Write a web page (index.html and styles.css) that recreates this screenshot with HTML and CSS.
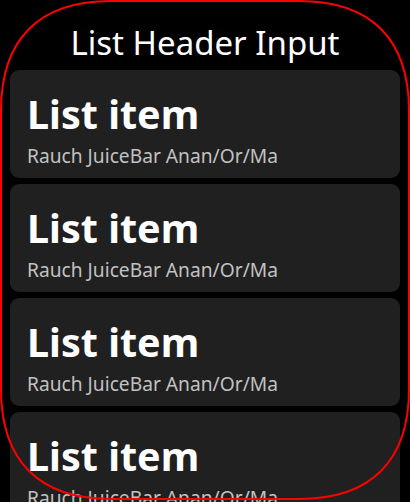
FILE: index.html
```html
<!DOCTYPE html>
<html>
<head>
<meta charset="utf-8">
<link rel="stylesheet" href="styles.css">
</head>
<body>
<div class="screen">
  <div class="header">List Header Input</div>
  <div class="list">
    <div class="item"><div class="title">List item</div><div class="sub">Rauch JuiceBar Anan/Or/Ma</div></div>
    <div class="item"><div class="title">List item</div><div class="sub">Rauch JuiceBar Anan/Or/Ma</div></div>
    <div class="item"><div class="title">List item</div><div class="sub">Rauch JuiceBar Anan/Or/Ma</div></div>
    <div class="item"><div class="title">List item</div><div class="sub">Rauch JuiceBar Anan/Or/Ma</div></div>
  </div>
  <svg class="frame" width="410" height="500" viewBox="0 0 410 500">
    <path d="M1,111 C1,39 39,1 111,1 L299,1 C371,1 409,39 409,111 L409,389 C409,461 371,499 299,499 L111,499 C39,499 1,461 1,389 Z" fill="none" stroke="#ff0000" stroke-width="2"/>
  </svg>
</div>
</body>
</html>
```
FILE: styles.css
```css
html, body {
  margin: 0;
  padding: 0;
  background: #000;
}
.screen {
  position: relative;
  width: 410px;
  height: 502px;
  overflow: hidden;
  font-family: "Noto Sans", "Open Sans", sans-serif;
  color: #fff;
}
.header {
  height: 70px;
  box-sizing: border-box;
  padding-top: 23px;
  text-align: center;
  font-size: 33px;
  line-height: 40px;
  white-space: nowrap;
}
.list {
  display: flex;
  flex-direction: column;
  gap: 6px;
  padding: 0 10px;
}
.item {
  height: 108px;
  flex: none;
  box-sizing: border-box;
  background: #202020;
  border-radius: 9px;
  padding: 20px 17px 0;
}
.title {
  font-size: 39.5px;
  font-weight: 700;
  line-height: 48px;
}
.sub {
  margin-top: 5px;
  font-size: 19.2px;
  line-height: 26px;
  color: #c2c2c2;
  white-space: nowrap;
}
.frame {
  position: absolute;
  left: 0;
  top: 0;
  pointer-events: none;
}
```
